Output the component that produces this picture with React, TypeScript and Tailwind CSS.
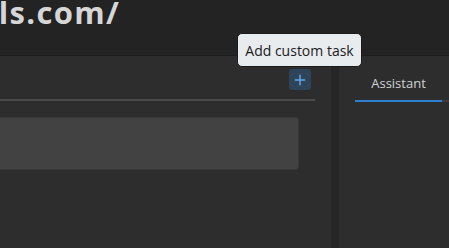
import { Plus } from "lucide-react";

// Editor-ish shell: url header, task list on the left, assistant tab on the right.
export default function App() {
  return (
    <div className="relative flex h-[248px] w-full flex-col overflow-hidden bg-[#2d2d2d] font-['Open_Sans',sans-serif]">
      <header className="flex h-[56px] shrink-0 border-b border-[#1e1e1e] bg-[#232323]">
        <div className="flex w-[120px] justify-end overflow-hidden whitespace-nowrap">
          <h1 className="-mt-[11px] text-[31px] font-bold leading-[46px] tracking-[1.3px] text-[#d6d6d6]">
            https://tutorials.com/
          </h1>
        </div>
      </header>

      <div className="flex flex-1">
        {/* tasks */}
        <section className="flex w-[331px] shrink-0 flex-col pr-4">
          <div className="flex h-[45px] items-end justify-end border-b-2 border-[#4a4a4a] pb-[9px] pr-1">
            <button className="flex h-[21px] w-[22px] items-center justify-center rounded-[3px] bg-[#2d4459] text-[#5aa8ea]">
              <Plus size={16} strokeWidth={2.2} />
            </button>
          </div>
          <div className="mr-4 mt-[16px] h-[53px] rounded-r-[4px] border border-l-0 border-[#393939] bg-[#424242]" />
        </section>

        <div className="w-[8px] shrink-0 bg-[#262626]" />

        {/* side panel */}
        <aside className="flex flex-1 flex-col pl-4">
          <div className="flex h-[46px] border-b-2 border-[#3c3c3c]">
            <div className="-mb-[2px] flex w-[87px] items-center justify-center border-b-2 border-[#2f7fd0] pt-[12px] text-[13px] text-[#cfd3d6]">
              Assistant
            </div>
          </div>
        </aside>
      </div>

      <div className="absolute left-[237px] top-[33px] flex h-[34px] w-[125px] items-center justify-center rounded-[5px] border border-[#1b1b1b] bg-[#e9ecef] text-[14px] text-[#202020]">
        Add custom task
      </div>
    </div>
  );
}
